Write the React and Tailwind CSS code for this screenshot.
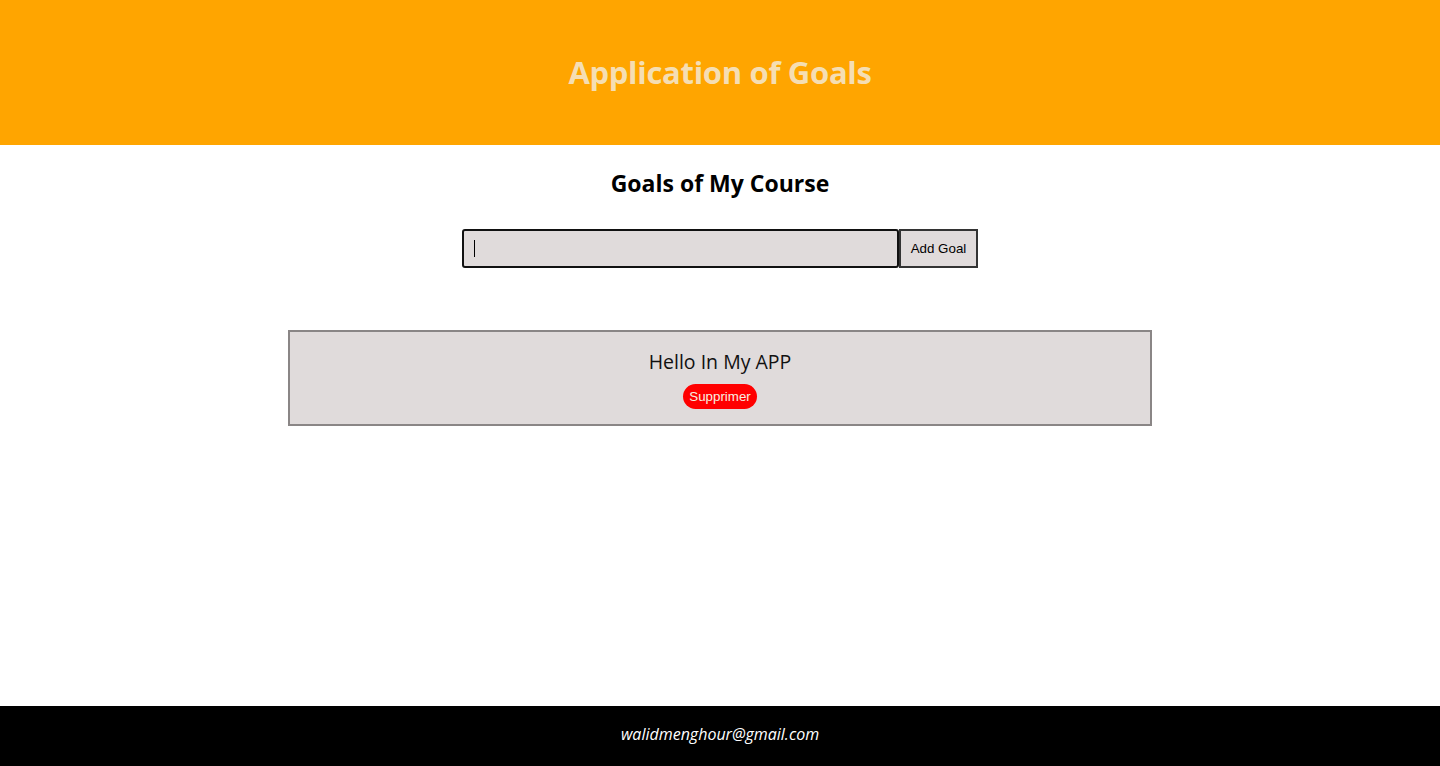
export default function App() {
  return (
    <div className="min-h-screen flex flex-col bg-white" style={{ fontFamily: '"Open Sans", "Noto Sans", sans-serif' }}>
      <header className="h-[145px] bg-[#ffa500] flex items-center justify-center">
        <h1 className="text-[31px] font-bold text-[#f5deb3] tracking-[-0.3px]" style={{ fontFamily: '"Open Sans", sans-serif' }}>Application of Goals</h1>
      </header>
      <main className="flex-1 flex flex-col items-center">
        <h2 className="mt-[24px] text-[23px] font-bold text-black leading-[28px] tracking-[0px]">Goals of My Course</h2>
        <div className="mt-[32px] flex">
          <div className="w-[437px] h-[39px] bg-[#e0dbdb] border-2 border-[#111] rounded-[3px] flex items-center pl-[10px]">
            <span className="w-px h-[17px] bg-black"></span>
          </div>
          <button className="w-[79px] h-[39px] bg-[#e0dbdb] border-2 border-[#333] text-[13.33px] text-black" style={{ fontFamily: '"Liberation Sans", Arial, sans-serif' }}>Add Goal</button>
        </div>
        <div className="mt-[62px] w-[864px] h-[96px] bg-[#e0dbdb] border-2 border-[#8a8686] flex flex-col items-center">
          <p className="mt-[17px] text-[19.5px] leading-[26px] text-[#111]" style={{ fontFamily: '"Open Sans", sans-serif' }}>Hello In My APP</p>
          <button className="mt-[9px] h-[25px] px-[6px] rounded-full bg-[#ff0000] text-[#f8f0e0] text-[13.33px]" style={{ fontFamily: '"Liberation Sans", Arial, sans-serif' }}>Supprimer</button>
        </div>
      </main>
      <footer className="h-[60px] bg-black flex items-center justify-center pb-[5px]">
        <span className="text-white italic text-[16px]">walidmenghour@gmail.com</span>
      </footer>
    </div>
  );
}
